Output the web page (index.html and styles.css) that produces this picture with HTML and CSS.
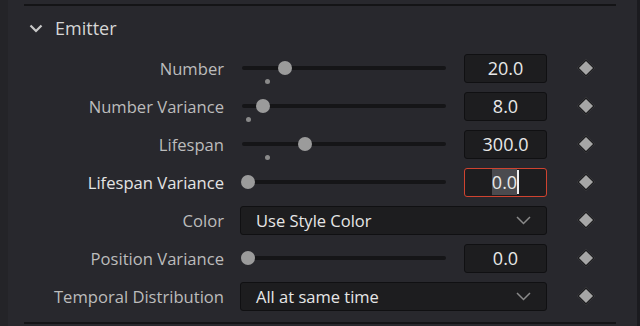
FILE: index.html
```html
<!DOCTYPE html>
<html>
<head>
    <meta charset="UTF-8">
    <title>Emitter</title>
    <link rel="stylesheet" href="styles.css">
</head>
<body>
    <div class="panel">
        <div class="rule"></div>
        <div class="section-head">
            <svg class="chev" width="14" height="9" viewBox="0 0 14 9"><path d="M1.5 1.5 L7 7 L12.5 1.5" fill="none" stroke="#c9c9c9" stroke-width="2.2"/></svg>
            <span class="section-title">Emitter</span>
        </div>

        <div class="rows">
            <label class="lbl">Number</label>
            <div class="ctl">
                <div class="slider">
                    <div class="track"></div>
                    <div class="thumb" style="left: 45px"></div>
                    <div class="dot" style="left: 26px"></div>
                </div>
                <div class="num">20.0</div>
            </div>
            <div class="key"><span class="diamond"></span></div>

            <label class="lbl">Number Variance</label>
            <div class="ctl">
                <div class="slider">
                    <div class="track"></div>
                    <div class="thumb" style="left: 23px"></div>
                    <div class="dot" style="left: 7px"></div>
                </div>
                <div class="num">8.0</div>
            </div>
            <div class="key"><span class="diamond"></span></div>

            <label class="lbl">Lifespan</label>
            <div class="ctl">
                <div class="slider">
                    <div class="track"></div>
                    <div class="thumb" style="left: 65px"></div>
                    <div class="dot" style="left: 26px"></div>
                </div>
                <div class="num">300.0</div>
            </div>
            <div class="key"><span class="diamond"></span></div>

            <label class="lbl active">Lifespan Variance</label>
            <div class="ctl">
                <div class="slider">
                    <div class="track"></div>
                    <div class="thumb" style="left: 8px"></div>
                </div>
                <div class="num editing"><span class="sel">0.0</span><span class="caret"></span></div>
            </div>
            <div class="key"><span class="diamond"></span></div>

            <label class="lbl">Color</label>
            <div class="ctl">
                <div class="combo">
                    <span>Use Style Color</span>
                    <svg width="15" height="9" viewBox="0 0 15 9"><path d="M1 1 L7.5 7.5 L14 1" fill="none" stroke="#8a8a8a" stroke-width="1.5"/></svg>
                </div>
            </div>
            <div class="key"><span class="diamond"></span></div>

            <label class="lbl">Position Variance</label>
            <div class="ctl">
                <div class="slider">
                    <div class="track"></div>
                    <div class="thumb" style="left: 8px"></div>
                </div>
                <div class="num">0.0</div>
            </div>
            <div class="key"><span class="diamond"></span></div>

            <label class="lbl">Temporal Distribution</label>
            <div class="ctl">
                <div class="combo">
                    <span>All at same time</span>
                    <svg width="15" height="9" viewBox="0 0 15 9"><path d="M1 1 L7.5 7.5 L14 1" fill="none" stroke="#8a8a8a" stroke-width="1.5"/></svg>
                </div>
            </div>
            <div class="key"><span class="diamond"></span></div>
        </div>

        <div class="rule bottom"></div>
    </div>
</body>
</html>
```

FILE: styles.css
```css
body {
    margin: 0;
    background-color: #28282d;
    font-family: "Open Sans", "Noto Sans", sans-serif;
}
.panel {
    width: 640px;
    height: 326px;
    box-sizing: border-box;
    padding-top: 4px;
    background-color: #28282d;
    border-left: 8px solid #242428;
    border-right: 3px solid #1b1b1f;
    display: flex;
    flex-direction: column;
    overflow: hidden;
}
.rule {
    height: 2px;
    margin-left: 16px;
    width: 592px;
    background-color: #141416;
}
.rule.bottom {
    margin-top: 7px;
}
.section-head {
    height: 43px;
    display: flex;
    align-items: center;
    padding-left: 21px;
}
.chev {
    margin-top: 1px;
}
.section-title {
    margin-left: 12px;
    color: #d6d6d6;
    font-size: 18px;
}

/* rows */
.rows {
    display: grid;
    grid-template-columns: 200px 307px 46px;
    grid-auto-rows: 38px;
    column-gap: 16px;
    padding-left: 16px;
}
.rows > * {
    display: flex;
    align-items: center;
}
.lbl {
    justify-content: flex-end;
    color: #bcbcbc;
    font-size: 16.6px;
    white-space: nowrap;
}
.lbl.active {
    color: #e4e4e4;
}
.ctl {
    gap: 18px;
}
.slider {
    position: relative;
    width: 204px;
    height: 14px;
    margin-left: 2px;
}
.track {
    position: absolute;
    left: 0;
    right: 0;
    top: 5px;
    height: 4px;
    border-radius: 2px;
    background-color: #151517;
}
.thumb {
    position: absolute;
    top: 0;
    width: 14px;
    height: 14px;
    margin-left: -9px;
    border-radius: 50%;
    background-color: #9b9b9b;
}
.dot {
    position: absolute;
    top: 18px;
    width: 5px;
    height: 5px;
    margin-left: -3px;
    border-radius: 50%;
    background-color: #8a8a8a;
}
.num {
    width: 83px;
    height: 29px;
    box-sizing: border-box;
    border: 1px solid #101012;
    border-radius: 3px;
    background-color: #1d1d1f;
    color: #e8e8e8;
    font-size: 18px;
    display: flex;
    align-items: center;
    justify-content: center;
}
.num.editing {
    border-color: #cf4330;
}
.sel {
    background-color: #4b4b4f;
    line-height: 26px;
}
.caret {
    width: 2px;
    height: 24px;
    background-color: #f0f0f0;
}
.combo {
    width: 307px;
    height: 29px;
    box-sizing: border-box;
    border: 1px solid #101012;
    border-radius: 3px;
    background-color: #1d1d1f;
    color: #e6e6e6;
    font-size: 16.5px;
    display: flex;
    align-items: center;
    justify-content: space-between;
    padding: 0 15px 0 15px;
}
.key {
    justify-content: center;
}
.diamond {
    width: 10px;
    height: 10px;
    background-color: #a6a6a6;
    border: 1px solid #0c0c0e;
    transform: rotate(45deg);
}
```
